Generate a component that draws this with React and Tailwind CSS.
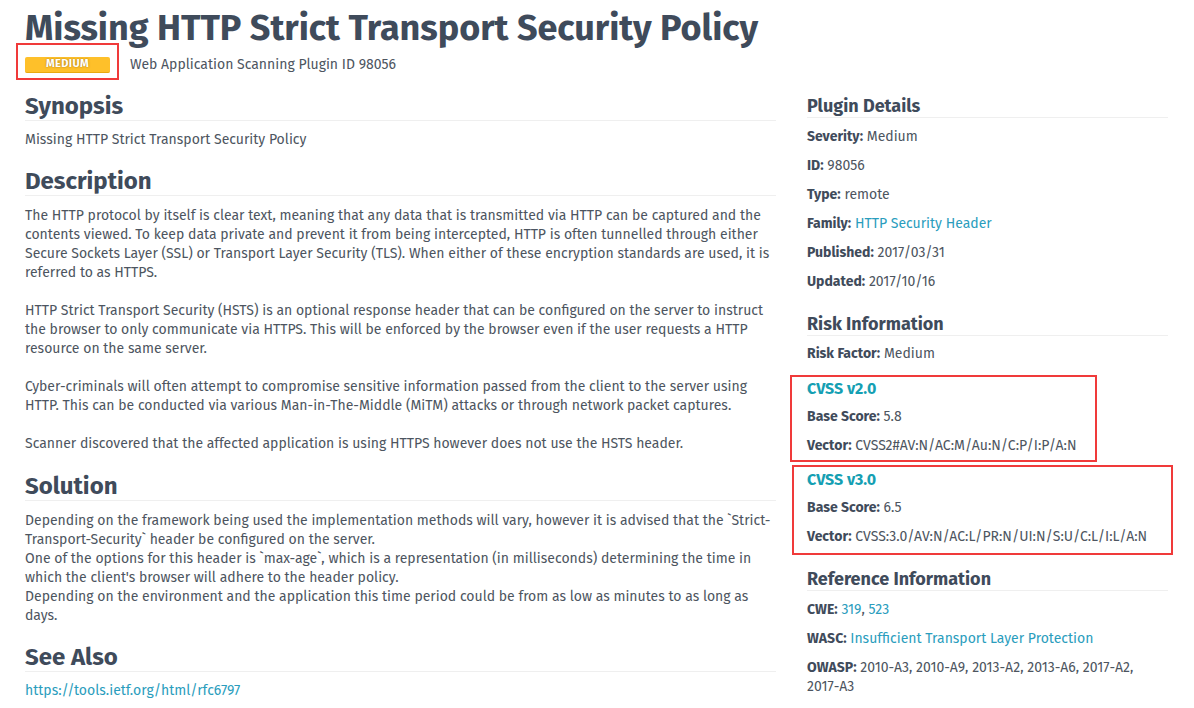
const body = "text-[14px] leading-[19px] text-[#4d5560]";
const label = "font-bold text-[#3f4b5b]";
const link = "text-[#2a9dbd]";

function SectionTitle({ children, className = "" }) {
  return (
    <h2
      className={`border-b border-[#efefef] text-[24px] font-bold leading-[28px] text-[#3f4b5b] ${className}`}
    >
      {children}
    </h2>
  );
}

function SideTitle({ children, className = "" }) {
  return (
    <h3
      className={`border-b border-[#efefef] text-[18px] font-bold leading-[22px] text-[#3f4b5b] ${className}`}
    >
      {children}
    </h3>
  );
}

function Row({ name, children, className = "mb-[10px]" }) {
  return (
    <p className={`${body} ${className}`}>
      <span className={label}>{name}:</span> {children}
    </p>
  );
}

function CvssBlock({ version, score, vector, boxClass }) {
  return (
    <div className="relative">
      <div className={`pointer-events-none absolute border-2 border-[#f03a3a] ${boxClass}`} />
      <p className="text-[16px] font-bold leading-[19px] text-[#159fb3]">{version}</p>
      <Row name="Base Score" className="mt-[9px]">
        {score}
      </Row>
      <Row name="Vector" className="mt-[10px]">
        {vector}
      </Row>
    </div>
  );
}

export default function App() {
  return (
    <div
      className="min-h-[708px] bg-white px-[25px] pt-[6px]"
      style={{ fontFamily: '"Fira Sans", Lato, "Open Sans", sans-serif' }}
    >
      <h1 className="text-[36px] font-bold leading-[44px] tracking-[-0.03px] text-[#3f4b5b]">
        Missing HTTP Strict Transport Security Policy
      </h1>

      <div className="mt-[4px] flex h-[20px] items-center">
        <div className="relative mt-[2px]">
          <div className="pointer-events-none absolute -bottom-[7px] -left-[9px] -right-[9px] -top-[14px] border-2 border-[#f03a3a]" />
          <span className="flex h-[16px] w-[85px] items-center justify-center rounded-[2px] border-b border-[#e9a90f] bg-[#fec02a] text-[11px] font-bold tracking-[0.4px] text-white [text-shadow:0_0_2px_rgba(120,80,0,0.7)]">
            MEDIUM
          </span>
        </div>
        <span className={`ml-[20px] ${body}`}>Web Application Scanning Plugin ID 98056</span>
      </div>

      <div className="mt-[18px] flex gap-[31px]">
        <main className="w-[751px] shrink-0">
          <SectionTitle>Synopsis</SectionTitle>
          <p className={`mt-[9px] ${body}`}>Missing HTTP Strict Transport Security Policy</p>

          <SectionTitle className="mt-[18px]">Description</SectionTitle>
          <div className={`mt-[10px] space-y-[19px] ${body}`}>
            <p>
              The HTTP protocol by itself is clear text, meaning that any data that is transmitted via HTTP can be
              captured and the contents viewed. To keep data private and prevent it from being intercepted, HTTP is
              often tunnelled through either Secure Sockets Layer (SSL) or Transport Layer Security (TLS). When either
              of these encryption standards are used, it is referred to as HTTPS.
            </p>
            <p>
              HTTP Strict Transport Security (HSTS) is an optional response header that can be configured on the
              server to instruct the browser to only communicate via HTTPS. This will be enforced by the browser even
              if the user requests a HTTP resource on the same server.
            </p>
            <p>
              Cyber-criminals will often attempt to compromise sensitive information passed from the client to the
              server using HTTP. This can be conducted via various Man-in-The-Middle (MiTM) attacks or through network
              packet captures.
            </p>
            <p>Scanner discovered that the affected application is using HTTPS however does not use the HSTS header.</p>
          </div>

          <SectionTitle className="mt-[19px]">Solution</SectionTitle>
          <p className={`mt-[10px] ${body}`}>
            Depending on the framework being used the implementation methods will vary, however it is advised that the
            `Strict-Transport-Security` header be configured on the server.
            <br />
            One of the options for this header is `max-age`, which is a representation (in milliseconds) determining
            the time in which the client's browser will adhere to the header policy.
            <br />
            Depending on the environment and the application this time period could be from as low as minutes to as
            long as days.
          </p>

          <SectionTitle className="mt-[18px]">See Also</SectionTitle>
          <p className={`mt-[9px] ${body}`}>
            <a className={link}>https://tools.ietf.org/html/rfc6797</a>
          </p>
        </main>

        <aside className="w-[361px] shrink-0 pt-[3px]">
          <SideTitle>Plugin Details</SideTitle>
          <div className="mt-[9px]">
            <Row name="Severity">Medium</Row>
            <Row name="ID">98056</Row>
            <Row name="Type">remote</Row>
            <Row name="Family">
              <a className={link}>HTTP Security Header</a>
            </Row>
            <Row name="Published">2017/03/31</Row>
            <Row name="Updated" className="">
              2017/10/16
            </Row>
          </div>

          <SideTitle className="mt-[22px]">Risk Information</SideTitle>
          <Row name="Risk Factor" className="mt-[8px]">
            Medium
          </Row>

          <div className="mt-[16px]">
            <CvssBlock
              version="CVSS v2.0"
              score="5.8"
              vector="CVSS2#AV:N/AC:M/Au:N/C:P/I:P/A:N"
              boxClass="-left-[17px] -top-[4px] right-[71px] -bottom-[7px]"
            />
          </div>
          <div className="mt-[15px]">
            <CvssBlock
              version="CVSS v3.0"
              score="6.5"
              vector="CVSS:3.0/AV:N/AC:L/PR:N/UI:N/S:U/C:L/I:L/A:N"
              boxClass="-left-[15px] -top-[5px] -right-[5px] -bottom-[9px]"
            />
          </div>

          <SideTitle className="mt-[22px]">Reference Information</SideTitle>
          <div className="mt-[9px]">
            <Row name="CWE">
              <a className={link}>319</a>, <a className={link}>523</a>
            </Row>
            <Row name="WASC">
              <a className={link}>Insufficient Transport Layer Protection</a>
            </Row>
            <Row name="OWASP">2010-A3, 2010-A9, 2013-A2, 2013-A6, 2017-A2, 2017-A3</Row>
          </div>
        </aside>
      </div>
    </div>
  );
}
